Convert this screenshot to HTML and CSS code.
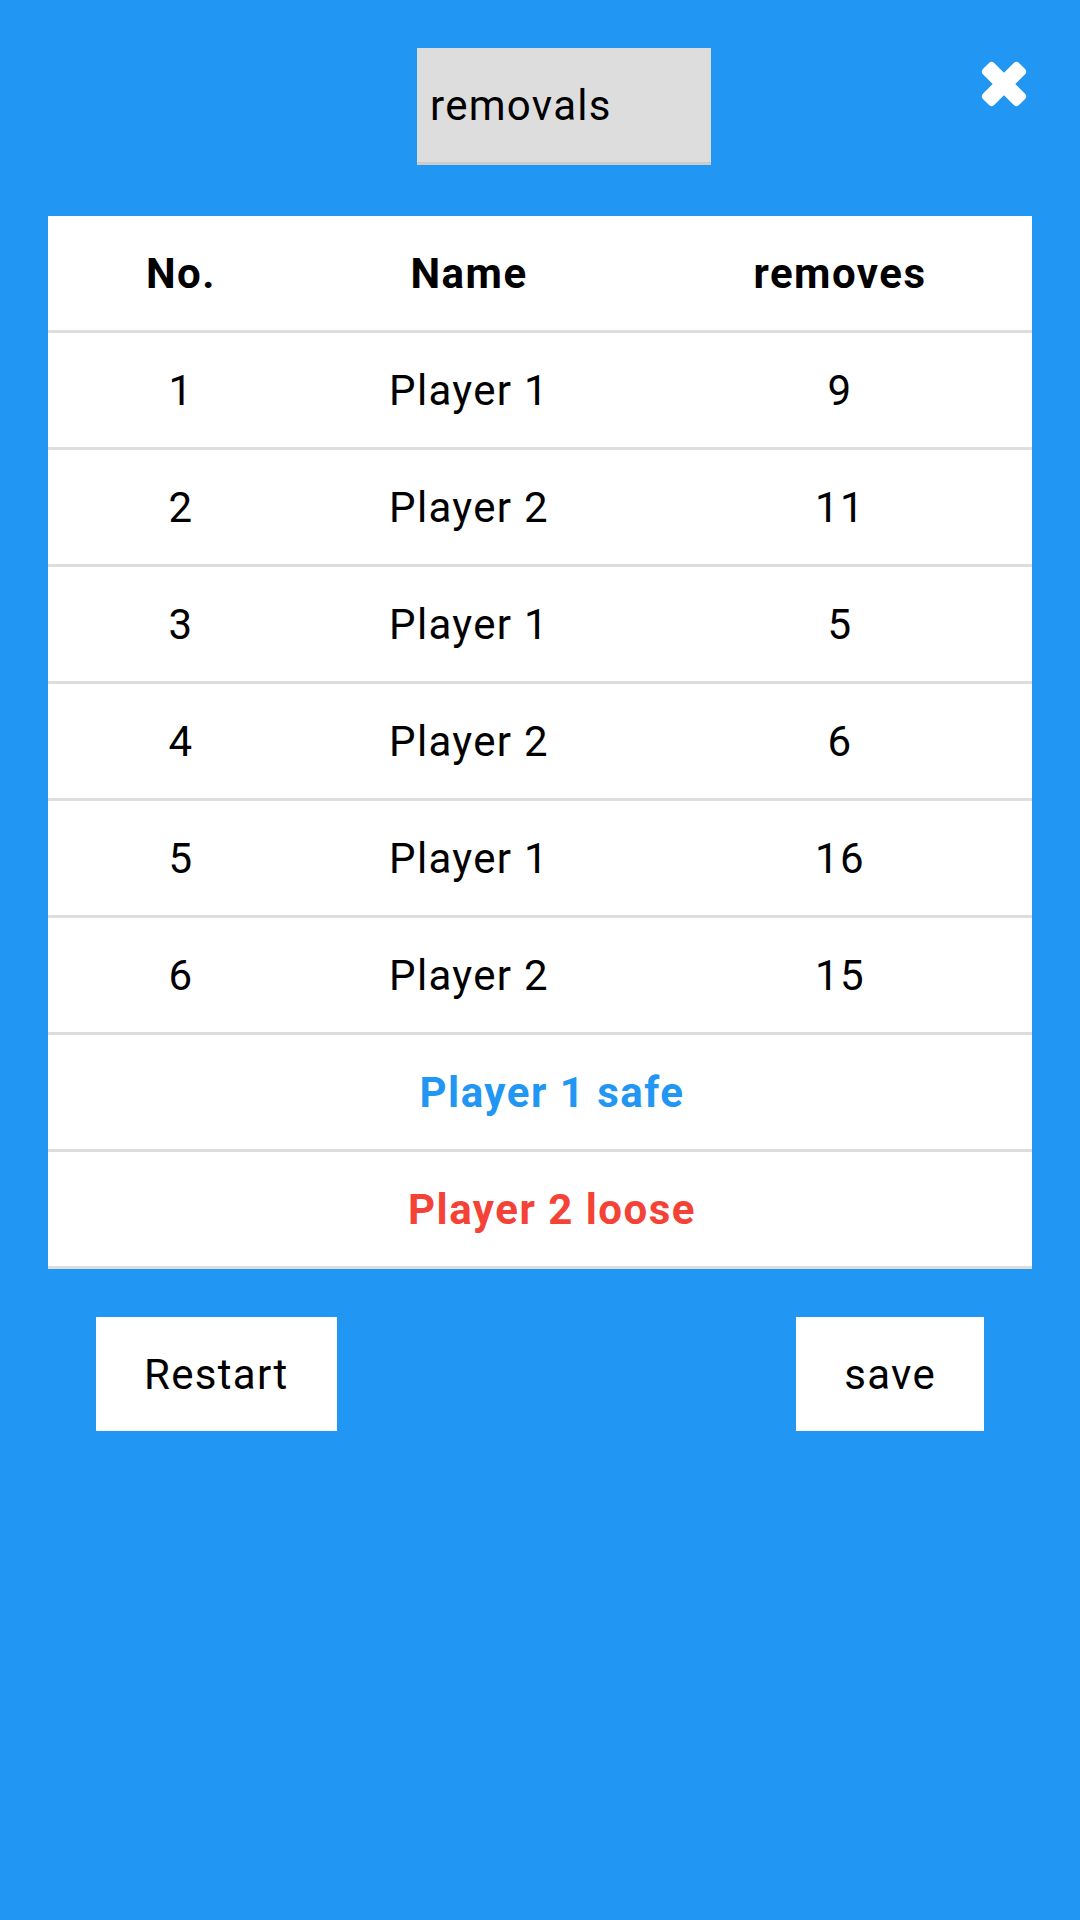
FILE: index.html
```html
<!DOCTYPE html>
<html>
<head>
<meta charset="utf-8">
<link rel="stylesheet" href="styles.css">
</head>
<body>
<div class="topbar">
  <div class="dropdown">removals</div>
  <div class="close">
    <svg width="48" height="48" viewBox="0 0 48 48">
      <rect x="-1.5" y="16" width="51" height="16" rx="4" transform="rotate(45 24 24)" fill="#fff"/>
      <rect x="-1.5" y="16" width="51" height="16" rx="4" transform="rotate(-45 24 24)" fill="#fff"/>
    </svg>
  </div>
</div>
<div class="table">
  <div class="row head"><div class="c1">No.</div><div class="c2">Name</div><div class="c3">removes</div></div>
  <div class="row"><div class="c1">1</div><div class="c2">Player 1</div><div class="c3">9</div></div>
  <div class="row"><div class="c1">2</div><div class="c2">Player 2</div><div class="c3">11</div></div>
  <div class="row"><div class="c1">3</div><div class="c2">Player 1</div><div class="c3">5</div></div>
  <div class="row"><div class="c1">4</div><div class="c2">Player 2</div><div class="c3">6</div></div>
  <div class="row"><div class="c1">5</div><div class="c2">Player 1</div><div class="c3">16</div></div>
  <div class="row"><div class="c1">6</div><div class="c2">Player 2</div><div class="c3">15</div></div>
  <div class="row result safe">Player 1 safe</div>
  <div class="row result loose">Player 2 loose</div>
</div>
<div class="actions">
  <div class="btn">Restart</div>
  <div class="btn">save</div>
</div>
</body>
</html>
```
FILE: styles.css
```css
html, body {
  margin: 0;
  padding: 0;
}
body {
  background: #2196F3;
  font-family: Roboto, "Noto Sans", sans-serif;
  font-size: 42px;
  letter-spacing: 1.3px;
  color: #000;
  width: 1080px;
  height: 1920px;
}
.topbar {
  display: flex;
  align-items: flex-start;
  padding: 48px 52px 0 417px;
}
.dropdown {
  width: 294px;
  height: 117px;
  box-sizing: border-box;
  background: #dddddd;
  border-bottom: 3px solid #cccccc;
  padding-left: 13px;
  display: flex;
  align-items: center;
}
.close {
  margin-left: auto;
  width: 48px;
  height: 48px;
  margin-top: 12px;
}
.close svg {
  display: block;
}
.table {
  margin: 51px 48px 0 48px;
  background: #fff;
}
.row {
  display: grid;
  grid-template-columns: 266px 310px 1fr;
  height: 114px;
  border-bottom: 3px solid #dddddd;
  align-items: center;
  text-align: center;
}
.c3 {
  padding-left: 24px;
}
.head {
  font-weight: bold;
  letter-spacing: 1.5px;
}
.result {
  display: flex;
  justify-content: center;
  padding-left: 24px;
  font-weight: bold;
  letter-spacing: 1.5px;
}
.safe {
  color: #2196F3;
}
.loose {
  color: #F44336;
}
.actions {
  display: flex;
  justify-content: space-between;
  margin-top: 48px;
  padding: 0 96px;
}
.btn {
  background: #fff;
  height: 114px;
  padding: 0 48px;
  display: flex;
  align-items: center;
}
```
